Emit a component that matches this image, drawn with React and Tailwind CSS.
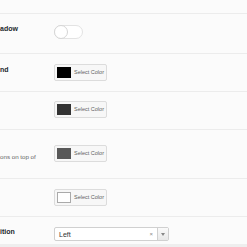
import React from "react"

const font = { fontFamily: '"Liberation Sans", Arial, sans-serif' }

function Label({ text }) {
  return (
    <span className="block whitespace-nowrap text-[7px] leading-[9px] font-bold text-[#23282d]">{text}</span>
  )
}

function ColorButton({ swatch }) {
  return (
    <div className="flex items-center w-[53px] h-[17px] bg-[#f7f7f7] border border-[#dcdcdc] rounded-[2px] pl-[2px]">
      <div className={`w-[14px] h-[11px] ${swatch}`}></div>
      <span className="ml-[3px] text-[5.5px] leading-[7px] text-[#5f5f5f] whitespace-nowrap">Select Color</span>
    </div>
  )
}

export default function App() {
  return (
    <div className="w-[247px] h-[247px] overflow-hidden bg-[#fbfbfb] antialiased" style={font}>
      {/* previous row stub */}
      <div className="h-[14px] border-b border-[#ececec]"></div>

      {/* Box shadow toggle */}
      <div className="flex items-start h-[40px] border-b border-[#ececec]">
        <div className="w-[54px] shrink-0 pt-[10px]">
          <Label text="adow" />
        </div>
        <div className="pt-[11px]">
          <div className="relative w-[29px] h-[14px] rounded-full bg-white border border-[#e3e3e3]">
            <div className="absolute -left-px -top-px w-[14px] h-[14px] rounded-full bg-white border border-[#d5d5d5]"></div>
          </div>
        </div>
      </div>

      {/* Background */}
      <div className="flex items-start h-[38px] border-b border-[#ececec]">
        <div className="w-[54px] shrink-0 pt-[11px]">
          <Label text="nd" />
        </div>
        <div className="pt-[10px]">
          <ColorButton swatch="bg-black" />
        </div>
      </div>

      {/* Text color */}
      <div className="flex items-start h-[38px] border-b border-[#ececec]">
        <div className="w-[54px] shrink-0"></div>
        <div className="pt-[9px]">
          <ColorButton swatch="bg-[#333333]" />
        </div>
      </div>

      {/* Icon color */}
      <div className="flex items-start h-[49px] border-b border-[#ececec]">
        <div className="w-[54px] shrink-0 pt-[23px]">
          <span className="block whitespace-nowrap text-[6.2px] leading-[8px] text-[#666]">ons on top of</span>
        </div>
        <div className="pt-[15px]">
          <ColorButton swatch="bg-[#585858]" />
        </div>
      </div>

      {/* Hover color */}
      <div className="flex items-start h-[38px] border-b border-[#ececec]">
        <div className="w-[54px] shrink-0"></div>
        <div className="pt-[10px]">
          <ColorButton swatch="bg-white border border-[#aaaaaa]" />
        </div>
      </div>

      {/* Position */}
      <div className="flex items-start h-[27px]">
        <div className="w-[54px] shrink-0 pt-[10px]">
          <Label text="ition" />
        </div>
        <div className="pt-[10px]">
          <div className="flex items-center w-[115px] h-[14px] bg-white border border-[#d0d0d0] rounded-[2px]">
            <span className="flex-1 pl-[4px] text-[7px] leading-[9px] text-[#333]">Left</span>
            <span className="text-[6px] leading-[6px] text-[#888] mr-[4px]">×</span>
            <div className="flex items-center justify-center w-[11px] h-full border-l border-[#d0d0d0] bg-gradient-to-b from-[#fafafa] to-[#e8e8e8]">
              <div className="w-0 h-0 border-l-[2px] border-r-[2px] border-t-[3px] border-l-transparent border-r-transparent border-t-[#888]"></div>
            </div>
          </div>
        </div>
      </div>
      <div className="h-[10px] bg-[#eeeeee]"></div>
    </div>
  )
}
